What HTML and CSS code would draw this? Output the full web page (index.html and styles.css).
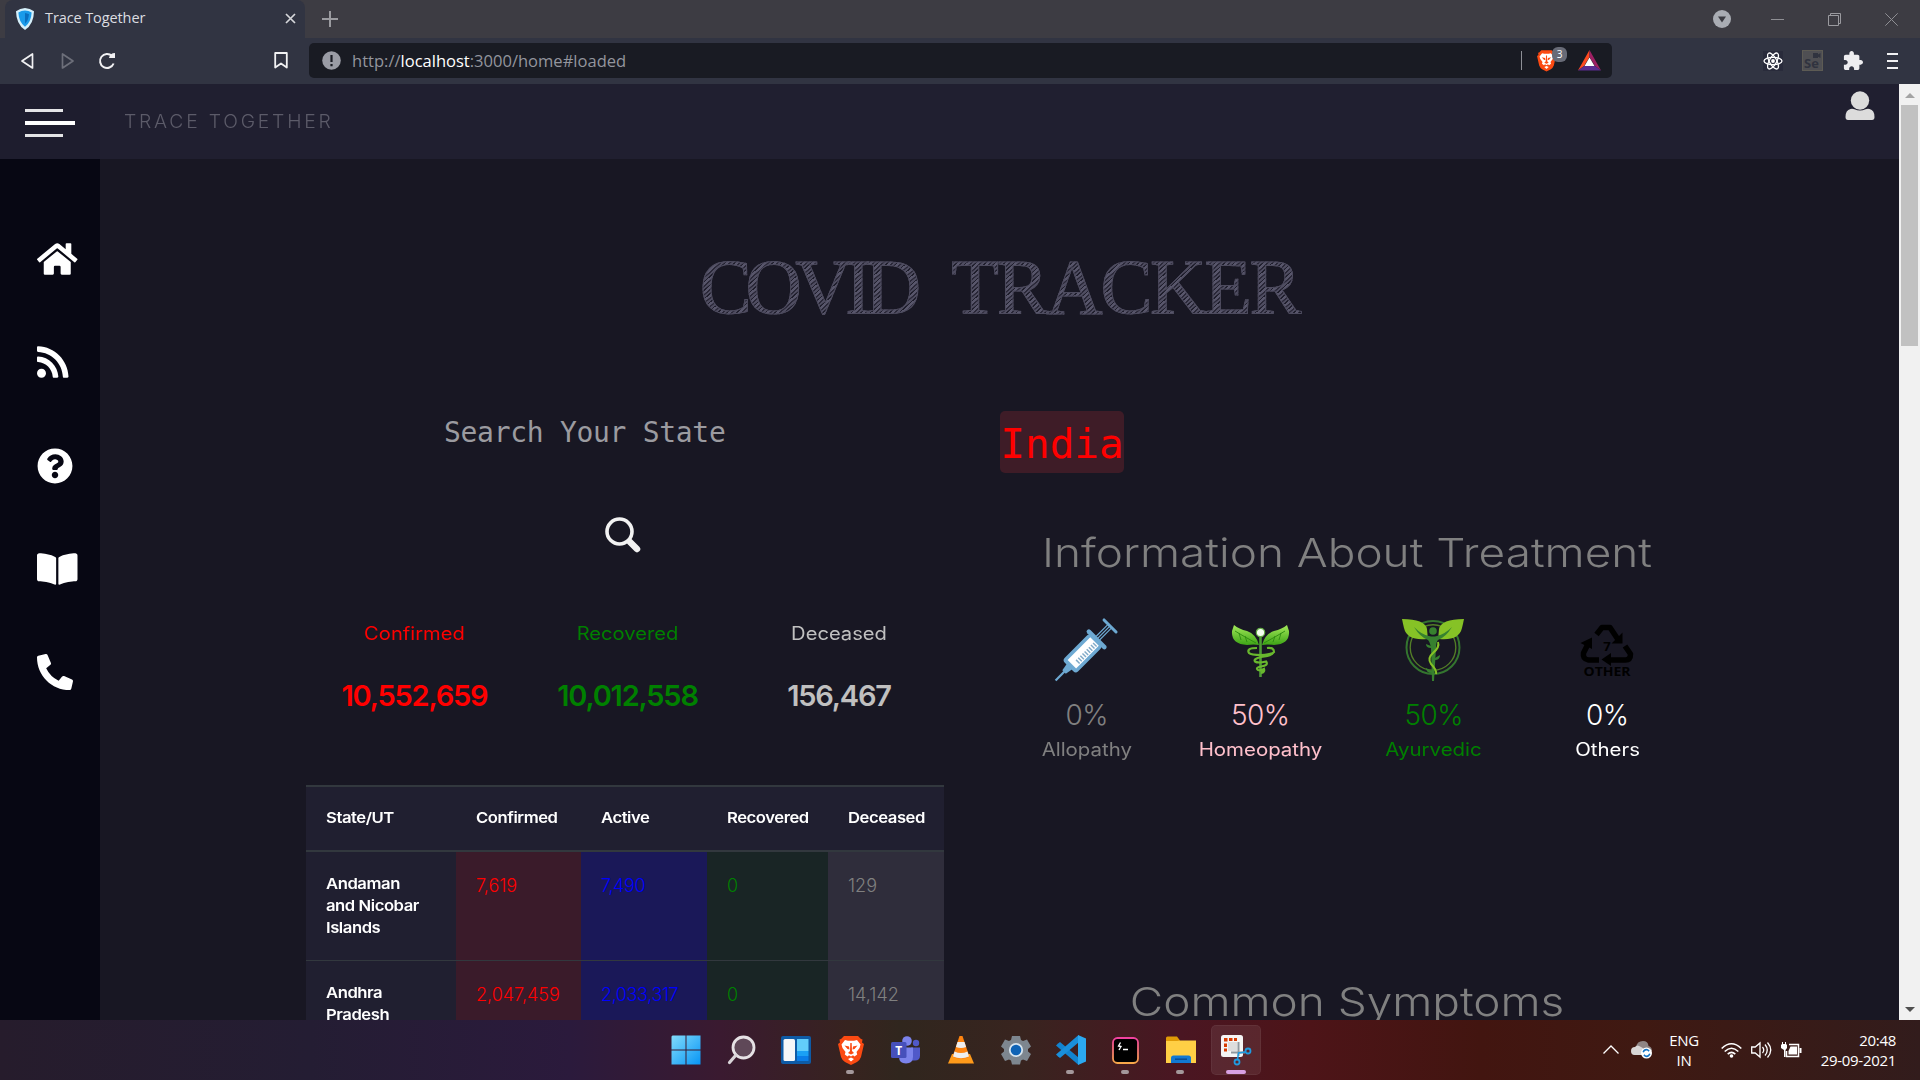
FILE: index.html
```html
<!DOCTYPE html>
<html lang="en">
<head>
<meta charset="utf-8">
<title>Trace Together</title>
<link rel="stylesheet" href="styles.css">
</head>
<body>
<svg class="defs" width="0" height="0">
  <defs>
    <symbol id="lion" viewBox="0 0 26 30">
      <path fill="#fb4a12" d="M6 1h14l3 3 1.500 0.500-.5 3L26 9l-3 13q-1 3-4 5l-6 3-6-3q-3-2-4-5L0 9l2-1.500L1.500 4.500 3 4z"/>
      <path fill="#fff" d="M7 5l3 .8h6L19 5l3.500 4.500-1 3.500-3 4 .7 2.500-2.700 2-1.500-1.200L13 21.500l-2 -1.200-1.500 1.200-2.700-2 .7-2.500-3-4-1-3.500zM13 22.500l3 1.500-3 2.500-3-2.500z"/>
      <path fill="#fb4a12" d="M6.500 10.500l4.500 1 .5 3-2-.5zM19.500 10.500l-4.500 1-.5 3 2-.5zM12.300 8h1.400l.3 8 2 2-3 1.500-3-1.500 2-2z"/>
    </symbol>
  </defs>
</svg>

<div class="tabstrip">
  <div class="tab">
    <svg width="18" height="22" viewBox="0 0 18 22"><path fill="#d5f0fb" d="M9 0q5 .2 9 3.200-.2 13-9 18.800Q.2 16.200 0 3.200 4 .2 9 0z"/><path fill="#1a9bea" d="M9 2.500q3.600.2 6.600 2-.4 9.600-6.600 14.300Q2.800 14.100 2.400 4.500q3-1.800 6.600-2z"/><path fill="#0a6fc0" d="M9 5q2 .2 4 1.200-.6 6.300-4 9.600z"/></svg>
    <span class="tab-title">Trace Together</span>
    <svg class="tab-close" width="11" height="11" viewBox="0 0 11 11"><path d="M1 1l9 9M10 1l-9 9" stroke="#d5d6da" stroke-width="1.700"/></svg>
  </div>
  <svg class="newtab" width="16" height="16" viewBox="0 0 16 16"><path d="M8 0v16M0 8h16" stroke="#9b9ba0" stroke-width="2"/></svg>
  <div class="winctl">
    <svg width="18" height="18" viewBox="0 0 18 18"><circle cx="9" cy="9" r="9" fill="#a9acb3"/><path fill="#3b3b42" d="M5 6.500h8L9 12.500z"/></svg>
    <svg width="13" height="13" viewBox="0 0 13 13"><path d="M0 6.500h13" stroke="#8f8f94"/></svg>
    <svg width="13" height="13" viewBox="0 0 13 13"><path d="M.5 2.500h10v10H.5zM2.500 2.500v-2h10v10h-2" fill="none" stroke="#9a9a9f"/></svg>
    <svg width="13" height="13" viewBox="0 0 13 13"><path d="M.3.3l12.400 12.400M12.700.3L.3 12.700" stroke="#8f8f94"/></svg>
  </div>
</div>

<div class="toolbar">
  <svg class="t-back" width="14" height="18" viewBox="0 0 14 18"><path d="M12.500 2v14L2 9z" fill="none" stroke="#f1f1f3" stroke-width="1.700" stroke-linejoin="round"/></svg>
  <svg class="t-fwd" width="14" height="18" viewBox="0 0 14 18"><path d="M1.500 2v14L12 9z" fill="none" stroke="#6d6f7a" stroke-width="1.700" stroke-linejoin="round"/></svg>
  <svg class="t-reload" width="18" height="18" viewBox="0 0 18 18"><path d="M15.600 11.500A7 7 0 1 1 14 4" fill="none" stroke="#f1f1f3" stroke-width="2"/><path d="M11 6h6V1q-5 0-6 5z" fill="#f1f1f3"/></svg>
  <svg class="t-mark" width="14" height="17" viewBox="0 0 14 17"><path d="M1.200 1h11.600v14.500L7 11.500l-5.800 4z" fill="none" stroke="#f1f1f3" stroke-width="1.800" stroke-linejoin="round"/></svg>
  <div class="url">
    <svg width="19" height="19" viewBox="0 0 19 19"><circle cx="9.500" cy="9.500" r="9.300" fill="#9a9ca5"/><path d="M9.500 4v7M9.500 13v2.200" stroke="#1a1c24" stroke-width="2.200"/></svg>
    <span class="url-text">http://<b>localhost</b>:3000/home#loaded</span>
    <i class="url-sep"></i>
    <span class="shield"><svg width="19" height="23"><use href="#lion"/></svg><em>3</em></span>
    <svg class="bat" width="23" height="21" viewBox="0 0 23 21"><path fill="#ff4a1f" d="M11.500 0v7L6 16l-6 4.500z"/><path fill="#9e1f63" d="M11.500 0L23 20.500 17 16l-5.500-9z"/><path fill="#5b2d90" d="M0 20.500L6 16h11l6 4.500z"/><path fill="#fff" d="M11.500 7.500L16.500 16h-10z"/></svg>
  </div>
  <div class="exts">
    <svg width="20" height="20" viewBox="0 0 20 20"><rect width="20" height="20" fill="#292b3b"/><g fill="none" stroke="#fff" stroke-width="1.300"><ellipse cx="10" cy="10" rx="9" ry="3.600"/><ellipse cx="10" cy="10" rx="9" ry="3.600" transform="rotate(60 10 10)"/><ellipse cx="10" cy="10" rx="9" ry="3.600" transform="rotate(120 10 10)"/></g><circle cx="10" cy="10" r="1.900" fill="#fff"/></svg>
    <svg width="21" height="21" viewBox="0 0 21 21"><rect x=".5" y=".5" width="20" height="20" fill="#4f4f53" stroke="#5d5b54"/><text x="2" y="18" class="se">Se</text><path fill="#30333f" d="M11 3h5v1.500l2.500-1.500v5L16 6.800V8h-5z"/></svg>
    <svg width="20" height="20" viewBox="1 1 22 22"><path fill="#ededf0" d="M20.500 11H19V7c0-1.100-.9-2-2-2h-4V3.500C13 2.120 11.880 1 10.500 1S8 2.120 8 3.500V5H4c-1.100 0-1.990.9-1.990 2v3.800H3.500c1.490 0 2.700 1.210 2.700 2.700s-1.210 2.700-2.700 2.700H2V20c0 1.100.9 2 2 2h3.800v-1.500c0-1.490 1.210-2.700 2.700-2.700 1.490 0 2.700 1.210 2.700 2.700V22H17c1.100 0 2-.9 2-2v-4h1.500c1.380 0 2.500-1.120 2.500-2.500S21.880 11 20.500 11z"/></svg>
    <svg width="11" height="16" viewBox="0 0 11 16"><path d="M0 1h11M0 8h11M0 15h11" stroke="#f1f1f3" stroke-width="2"/></svg>
  </div>
</div>

<div class="viewport">
  <div class="app">
    <header class="header">
      <div class="burger"><i></i><i></i><i></i></div>
      <div class="brand">TRACE TOGETHER</div>
      <svg class="user" width="30" height="30" viewBox="0 0 30 30"><circle cx="15" cy="9.500" r="9.200" fill="#dcdcdc"/><path fill="#dcdcdc" d="M.5 26q0-7 5-8 2-.5 4 .3 5.500 2.400 11 0 2-.8 4-.3 5 1 5 8 0 3-2.500 3H3Q.5 29 .5 26z"/></svg>
    </header>
    <div class="body">
      <nav class="side">
        <svg width="40.500" height="36" viewBox="0 0 576 512"><path d="M280.370 148.260L96 300.110V464a16 16 0 0 0 16 16l112.060-.29a16 16 0 0 0 15.920-16V368a16 16 0 0 1 16-16h64a16 16 0 0 1 16 16v95.640a16 16 0 0 0 16 16.050L464 480a16 16 0 0 0 16-16V300L295.670 148.260a12.190 12.190 0 0 0-15.300 0zM571.600 251.470L488 182.560V44.050a12 12 0 0 0-12-12h-56a12 12 0 0 0-12 12v72.610L318.470 43a48 48 0 0 0-61 0L4.340 251.470a12 12 0 0 0-1.600 16.900l25.500 31A12 12 0 0 0 45.150 301l235.220-193.740a12.190 12.190 0 0 1 15.300 0L530.900 301a12 12 0 0 0 16.900-1.600l25.500-31a12 12 0 0 0-1.700-16.930z"/></svg>
        <svg width="31.500" height="36" viewBox="0 0 448 512"><path d="M128.081 415.959c0 35.369-28.672 64.041-64.041 64.041S0 451.328 0 415.959s28.672-64.041 64.041-64.041 64.040 28.673 64.040 64.041zm175.660 47.250c-8.354-154.600-132.185-278.587-286.950-286.950C7.656 175.765 0 183.105 0 192.253v48.069c0 8.415 6.490 15.472 14.887 16.018 111.832 7.284 201.473 96.702 208.772 208.772.547 8.397 7.604 14.887 16.018 14.887h48.069c9.149.001 16.489-7.655 15.995-16.790zm144.249.288C439.596 229.677 251.465 40.445 16.503 32.010 7.473 31.686 0 38.981 0 48.016v48.068c0 8.625 6.835 15.645 15.453 15.999 191.179 7.839 344.627 161.316 352.465 352.465.353 8.618 7.373 15.453 15.999 15.453h48.068c9.034-.001 16.329-7.474 16.005-16.504z"/></svg>
        <svg width="36" height="36" viewBox="0 0 512 512"><path d="M504 256c0 136.997-111.043 248-248 248S8 392.997 8 256C8 119.083 119.043 8 256 8s248 111.083 248 248zM262.655 90c-54.497 0-89.255 22.957-116.549 63.758-3.536 5.286-2.353 12.415 2.715 16.258l34.699 26.310c5.205 3.947 12.621 3.008 16.665-2.122 17.864-22.658 30.113-35.797 57.303-35.797 20.429 0 45.698 13.148 45.698 32.958 0 14.976-12.363 22.667-32.534 33.976C247.128 238.528 216 254.941 216 296v4c0 6.627 5.373 12 12 12h56c6.627 0 12-5.373 12-12v-1.333c0-28.462 83.186-29.647 83.186-106.667 0-58.002-60.165-102-116.531-102zM256 338c-25.365 0-46 20.635-46 46 0 25.364 20.635 46 46 46s46-20.636 46-46c0-25.365-20.635-46-46-46z"/></svg>
        <svg width="40.500" height="36" viewBox="0 0 576 512"><path d="M542.220 32.050c-54.800 3.110-163.720 14.430-230.960 55.590-4.640 2.840-7.270 7.890-7.270 13.170v363.870c0 11.550 12.630 18.850 23.280 13.490 69.180-34.820 169.230-44.320 218.700-46.920 16.890-.89 30.020-14.430 30.020-30.660V62.750c.01-17.710-15.350-31.740-33.770-30.700zM264.730 87.640C197.500 46.480 88.580 35.170 33.780 32.050 15.360 31.010 0 45.040 0 62.750V400.600c0 16.240 13.130 29.780 30.020 30.660 49.490 2.600 149.590 12.110 218.770 46.950 10.620 5.350 23.210-1.940 23.210-13.460V100.630c0-5.290-2.620-10.140-7.270-12.990z"/></svg>
        <svg width="36" height="36" viewBox="0 0 512 512"><path d="M497.390 361.800l-112-48a24 24 0 0 0-28 6.900l-49.600 60.600A370.660 370.660 0 0 1 130.600 204.110l60.600-49.600a23.940 23.940 0 0 0 6.900-28l-48-112A24.160 24.160 0 0 0 122.600.61l-104 24A24 24 0 0 0 0 48c0 256.500 207.900 464 464 464a24 24 0 0 0 23.400-18.600l24-104a24.290 24.290 0 0 0-14.010-27.600z"/></svg>
      </nav>
      <main class="main">
        <h1 class="title"><span class="w1">COVID</span> <span class="w2">TRACKER</span></h1>
        <div class="cols">
          <section class="left">
            <div class="search-label">Search Your State</div>
            <svg class="search-icon" width="36" height="36" viewBox="0 0 36 36"><circle cx="14.500" cy="14.500" r="12.500" fill="none" stroke="#f2f2f2" stroke-width="3.600"/><path d="M25 25l7 7" stroke="#f2f2f2" stroke-width="6.500" stroke-linecap="round"/></svg>
            <div class="stats">
              <div class="stat red"><span>Confirmed</span><b>10,552,659</b></div>
              <div class="stat green"><span>Recovered</span><b>10,012,558</b></div>
              <div class="stat silver"><span>Deceased</span><b>156,467</b></div>
            </div>
            <table class="states">
              <colgroup><col class="c1"><col class="c2"><col class="c3"><col class="c4"><col class="c5"></colgroup>
              <tr><th><span>State/UT</span></th><th><span>Confirmed</span></th><th><span>Active</span></th><th><span>Recovered</span></th><th><span>Deceased</span></th></tr>
              <tr><th class="name"><span>Andaman<br>and Nicobar<br>Islands</span></th><td class="conf">7,619</td><td class="act">7,490</td><td class="rec">0</td><td class="dec">129</td></tr>
              <tr><th class="name"><span>Andhra<br>Pradesh</span></th><td class="conf">2,047,459</td><td class="act">2,033,317</td><td class="rec">0</td><td class="dec">14,142</td></tr>
            </table>
          </section>
          <section class="right">
            <div class="country">India</div>
            <h2 class="h-info">Information About Treatment</h2>
            <div class="treat">
              <div class="t-item gray">
                <svg width="62" height="62" viewBox="0 0 62 62"><g transform="rotate(45 31 31)"><path d="M31 59v15" stroke="#6da9d2" stroke-width="2.200"/><path fill="#6da9d2" d="M27 53h8l-1.500 9h-5z"/><rect x="21.500" y="17" width="19" height="38" rx="3.500" fill="#6da9d2"/><rect x="25" y="19" width="12" height="32" fill="#fff"/><path d="M31 21h5M31 24h5M31 27h5M31 30h5M31 33h5M31 36h5M31 39h5M31 42h5M31 45h5" stroke="#82abc8" stroke-width="1.500"/><path d="M20 16h22" stroke="#6da9d2" stroke-width="4.500" stroke-linecap="round"/><path d="M28.500 14V-2M31 14V-2M33.500 14V-2" stroke="#6da9d2" stroke-width="1.200"/><path d="M22.500 -3h17" stroke="#6da9d2" stroke-width="3" stroke-linecap="round"/></g></svg>
                <b>0%</b><span>Allopathy</span></div>
              <div class="t-item pink">
                <svg width="62" height="62" viewBox="0 0 62 62"><defs><linearGradient id="leaf" x1="0" y1="0" x2="0" y2="1"><stop offset="0" stop-color="#a4ea5a"/><stop offset="1" stop-color="#3da416"/></linearGradient></defs><path fill="url(#leaf)" d="M5 6q5 4 13 6 9 3 12 14-5-1-12 0Q2 25 3 12zM58 6q-5 4-13 6-9 3-12 14 5-1 12 0 16-1 15-14z"/><path d="M6 12q8 5 21 12M56 12q-8 5-21 12M10 14l2 7M16 17l2 6M52 14l-2 7M46 17l-2 6" stroke="#2c8a10" stroke-width=".9" fill="none"/><path d="M31.500 16v42" stroke="#4f9c36" stroke-width="2.600"/><g fill="none" stroke="#69b82e" stroke-width="2.200"><path d="M28 29q-11 0-8 5 2 2 12 2t13-3q0-5-7-4"/><path d="M44 34q-2 3-12 4-8 2-6 4.500 3 2 11 0 3 4-5 5-6 1-3 3.500 3 1 6-1 1 3-3 4"/></g><circle cx="31.500" cy="13.500" r="4.200" fill="#f4fff0" stroke="#63ab44" stroke-width="1.200"/></svg>
                <b>50%</b><span>Homeopathy</span></div>
              <div class="t-item green">
                <svg width="62" height="62" viewBox="0 0 62 62"><circle cx="31" cy="28.500" r="26.500" fill="none" stroke="#34752f" stroke-width="2"/><circle cx="31" cy="28.500" r="22.800" fill="none" stroke="#527d27" stroke-width="1.400"/><path fill="#86c226" d="M0 0q23 0 25 10 1 6 0 10-20 2-23-11Q1 5 0 0zM62 0Q39 0 37 10q-1 6 0 10 20 2 23-11 1-4 2-9z"/><path fill="#37812f" d="M12 8q8 8 15 9 4 1 8 0 8-2 15-9-6 10-14 13-2 2-2 8l-2 33h-2l-1-33q-1-6-3-8-8-3-14-13z"/><circle cx="31" cy="12" r="3.800" fill="#37812f"/><path d="M36 23q2 5-5 11-6 5-2 11 6 6 5 10" fill="none" stroke="#86c226" stroke-width="2"/><path fill="#37812f" d="M24 25l5 2v2q-5 0-5-4zM38 36l-5 3v2q5 0 5-5zM24 49l6 3v2q-6 0-6-5z"/></svg>
                <b>50%</b><span>Ayurvedic</span></div>
              <div class="t-item white">
                <svg width="62" height="62" viewBox="0 0 62 62"><g fill="none" stroke="#000" stroke-width="5.500" stroke-linejoin="round"><path d="M20.500 15.500l5.500-7h8l8 12M12 25L7.500 34q-1 6 5 7H23M49 27l5.500 8q0 6-5 6H34"/></g><path fill="#000" d="M46.500 13.500v11h-11zM4.500 24l11.500-5.500V30zM35 34v13l-9.500-6.500z"/><text x="31" y="32" class="rct">7</text><text x="31" y="56.500" class="rct" textLength="47" lengthAdjust="spacingAndGlyphs">OTHER</text></svg>
                <b>0%</b><span>Others</span></div>
            </div>
            <h2 class="h-sym">Common Symptoms</h2>
          </section>
        </div>
      </main>
    </div>
  </div>
  <div class="scrollbar"><i class="up"></i><i class="thumb"></i><i class="down"></i></div>
</div>

<div class="taskbar">
  <div class="apps">
    <div class="slot"><svg width="30" height="30" viewBox="0 0 30 30"><defs><linearGradient id="win" x1="0" y1="0" x2="1" y2="1"><stop offset="0" stop-color="#82dcfb"/><stop offset="1" stop-color="#0795f5"/></linearGradient></defs><path fill="url(#win)" d="M1.500.5H14.500v14H.5v-13zM15.500.5h14v14h-14zM.5 15.500h14v14H.5zM15.500 15.500h14v14h-14z"/></svg></div>
    <div class="slot"><svg width="30" height="30" viewBox="0 0 30 30"><circle cx="17.500" cy="12.500" r="10.500" fill="#5f4858" stroke="#e6e2e5" stroke-width="2.800"/><path d="M10 20L3.500 27.500" stroke="#d9d4d8" stroke-width="3.200" stroke-linecap="round"/></svg></div>
    <div class="slot"><svg width="30" height="28" viewBox="0 0 30 28"><rect width="30" height="28" rx="2" fill="#0e5ba6"/><rect x="2.500" y="3" width="11.500" height="22" rx="1.500" fill="#f4f6f8"/><path fill="#62cdfb" d="M16 3h11.500v12H16z"/><path fill="#1aa0f5" d="M16 15h11.500v5H16z"/><path fill="#0a7de8" d="M16 20h11.500v5H16z"/></svg></div>
    <div class="slot run"><svg width="26" height="30"><use href="#lion"/></svg></div>
    <div class="slot"><svg width="30" height="28" viewBox="0 0 30 28"><circle cx="25" cy="7" r="3.200" fill="#5059c9"/><path fill="#5059c9" d="M20 11.500h9v8q0 5-5 5h-4z"/><circle cx="16" cy="5" r="4.800" fill="#7b83eb"/><path fill="#7b83eb" d="M8 11.500h14v9q0 7-7 7t-7-7z"/><rect y="6" width="15.500" height="16" rx="1.500" fill="#4650bb"/><text x="7.700" y="18.500" class="teams">T</text></svg></div>
    <div class="slot"><svg width="26" height="28" viewBox="0 0 26 28"><path fill="#ff9a1a" d="M4 18h18l4 9.500H0z"/><path fill="#ff8410" d="M11.500 0h3l7 21q-8 4-17 0z"/><path fill="#eee" d="M9.500 6h7l1.600 5q-5 2-10.200 0zM6.500 15.500q6.500 3 13 0l1.500 5q-8 3.500-16 0z"/></svg></div>
    <div class="slot"><svg width="30" height="30" viewBox="0 0 30 30"><path fill="#7d868f" d="M11 1h8l1 4 2 1 4-1.500 4 7-3 2.500v2.500l3 2.500-4 7-4-1.500-2 1-1 4h-8l-1-4-2-1L4 26l-4-7 3-2.500V14l-3-2.500 4-7L8 6l2-1z"/><circle cx="15" cy="15" r="6.200" fill="#0f63b5" stroke="#d7e4ee" stroke-width="1.800"/></svg></div>
    <div class="slot run"><svg width="30" height="30" viewBox="0 0 30 30"><path fill="#1283cf" d="M2 8.500l2-1.500 18.500 15.500V30L0 10.500z"/><path fill="#1a8fdb" d="M2 21.500l2 1.500L22.500 7.500V0L0 19.500z"/><path fill="#2ba9f1" d="M22 0l8 3.500v23L22 30z"/></svg></div>
    <div class="slot run"><svg width="27" height="27" viewBox="0 0 27 27"><defs><linearGradient id="term" x1="0" y1="0" x2="0" y2="1"><stop offset="0" stop-color="#f0419f"/><stop offset="1" stop-color="#f8a849"/></linearGradient></defs><rect x="1" y="1" width="25" height="25" rx="4.500" fill="#000" stroke="url(#term)" stroke-width="1.800"/><path d="M8.500 5.500L6.500 9l2.500.5-2 3.500M11 12.500h5" fill="none" stroke="#fff" stroke-width="1.300"/></svg></div>
    <div class="slot run"><svg width="30" height="28" viewBox="0 0 30 28"><path fill="#e09a06" d="M0 2q0-1.500 1.500-1.500H11l3 4v6H0z"/><path fill="#ffcf45" d="M0 9V5h11l3-.5h16V27H0z"/><path fill="#1279d3" d="M5 27v-5q0-2.500 2.500-2.500h15Q25 19.500 25 22v5z"/><path d="M9 23.200h12" stroke="#0a4c92" stroke-width="1.500"/></svg></div>
    <div class="slot run active"><svg width="30" height="30" viewBox="0 0 30 30"><rect width="22" height="22" rx="2.500" fill="#f5f5f5"/><rect x="7" y="7" width="9" height="9" fill="#ddd"/><path fill="#d83b01" d="M3 3h3.500v3.500H3zM8 3h3.500v3H8zM13 3h3v3h-3zM3 8.500h3v3.500H3zM3 13.500h3v3H3z"/><path d="M17.500 7v14M10 17.500h14" stroke="#8f989e" stroke-width="2"/><circle cx="27" cy="16" r="2.500" fill="none" stroke="#1f9be0" stroke-width="1.800"/><circle cx="16" cy="27" r="2.500" fill="none" stroke="#1f9be0" stroke-width="1.800"/><path d="M24.800 17l-7.300 1-1 6.800" fill="none" stroke="#1f9be0" stroke-width="1.500"/></svg></div>
  </div>
  <div class="tray">
    <svg width="16" height="9" viewBox="0 0 16 9"><path d="M.5 8.500L8 1l7.500 7.500" fill="none" stroke="#fff" stroke-width="1.300"/></svg>
    <svg class="cloud" width="21" height="18" viewBox="0 0 21 18"><path fill="#8f8585" d="M5 6q1-6 7-6 5 0 5.500 5 3.500 1 3.500 5H5z"/><path fill="#d9d6d6" d="M0 10q0-4 4-4 2-3 6 0 4 1 4 8H3.500Q0 14 0 10z"/><circle cx="15.500" cy="12" r="5.500" fill="#fff"/><path d="M12.200 11.200q1-3 4-2.500l2 1.300M18.800 12.800q-1 3-4 2.500l-2-1.300" stroke="#1272c4" stroke-width="1.500" fill="none"/></svg>
    <div class="lang">ENG<br>IN</div>
    <svg class="wifi" width="21" height="16" viewBox="0 0 21 16"><g fill="none" stroke="#fff" stroke-width="1.600"><path d="M.7 6.500q9.800-9.500 19.600 0M3.700 9.500q6.800-6.500 13.600 0M6.700 12.200q3.800-3.500 7.600 0"/></g><circle cx="10.500" cy="14" r="1.800" fill="#fff"/></svg>
    <svg width="21" height="18" viewBox="0 0 21 18"><g fill="none" stroke="#fff" stroke-width="1.300"><path d="M.7 6v6h3.500L9 16V2L4.200 6z"/><path d="M11.500 6q2.500 3 0 6M14 3.500q4.500 5.500 0 11M16.500 1.500q6.500 7.500 0 15"/></g></svg>
    <svg width="21" height="16" viewBox="0 0 21 16"><path d="M8 2.500h9.500v12H5.500V9" fill="none" stroke="#fff" stroke-width="1.500"/><path fill="#fff" d="M9.500 4.500H16v8H7.500V9zM18.500 6h2v5h-2zM1 2.500V0h1v2h2V0h1v2.500h1V6L4.500 8v7H3V8L0 6V2.500z"/></svg>
    <div class="clock">20:48<br>29-09-2021</div>
  </div>
</div>
</body>
</html>
```
FILE: styles.css
```css
* { box-sizing: border-box; }
body { margin: 0; width: 1920px; height: 1080px; overflow: hidden; background: #181723; font-family: "Inter", "Liberation Sans", sans-serif; display: flex; flex-direction: column; }
svg { display: block; flex: none; overflow: visible; }
.defs { position: absolute; }

/* browser chrome */
.tabstrip, .toolbar, .taskbar { font-family: "Open Sans", "Noto Sans", sans-serif; }
.tabstrip { height: 38px; flex: none; display: flex; align-items: center; background: #3d3c43; padding-left: 5px; }
.tab { width: 300px; height: 38px; background: #313442; border-radius: 8px 8px 0 0; display: flex; align-items: center; padding: 0 9px 1px 11px; }
.tab-title { margin-left: 11px; font-size: 14.500px; line-height: 20px; padding-bottom: 1px; letter-spacing: -.1px; color: #dcdde1; white-space: nowrap; }
.tab-close { margin-left: auto; }
.newtab { margin-left: 17px; }
.winctl { margin-left: auto; display: flex; align-items: center; padding-right: 22px; }
.winctl svg:nth-child(2) { margin-left: 40px; }
.winctl svg:nth-child(3), .winctl svg:nth-child(4) { margin-left: 44px; }
.toolbar { height: 46px; flex: none; display: flex; align-items: center; background: #313442; padding-bottom: 1px; }
.t-back { margin-left: 20px; }
.t-fwd { margin-left: 27px; }
.t-reload { margin-left: 23px; }
.t-mark { margin-left: 158px; }
.url { margin-left: 21px; width: 1303px; height: 35px; border-radius: 5px; background: #191b23; display: flex; align-items: center; padding: 0 11px 0 13px; }
.url-text { margin-left: 11px; padding-bottom: 1px; font-size: 16.550px; color: #93959d; white-space: nowrap; }
.url-text b { font-weight: 400; color: #fff; }
.url-sep { margin-left: auto; width: 1px; height: 19px; background: #8d8f96; }
.shield { margin-left: 15px; display: flex; position: relative; width: 30px; }
.shield em { position: absolute; left: 15px; top: -2px; width: 15px; height: 15px; border-radius: 6px; background: #686b77; color: #fff; font: normal 10px/15px "Open Sans", sans-serif; text-align: center; }
.bat { margin-left: 11px; }
.exts { display: flex; align-items: center; padding-left: 151px; }
.exts svg:nth-child(2) { margin-left: 19px; }
.exts svg:nth-child(3) { margin-left: 20px; }
.exts svg:nth-child(4) { margin-left: 24px; }
.se { font: 700 13px "Open Sans", sans-serif; fill: #30333f; }

/* page */
.viewport { height: 936px; flex: none; display: flex; overflow: hidden; }
.app { width: 1899px; height: 936px; overflow: hidden; }
.header { height: 75px; display: flex; background: #201f30; }
.burger { width: 100px; height: 75px; background: #1e1d2e; padding: 25px 0 0 25px; display: flex; flex-direction: column; gap: 9px; }
.burger i { display: block; width: 38px; height: 3px; background: #e4e4e6; }
.burger i:nth-child(2) { width: 50px; height: 4px; background: #fff; }
.brand { margin-left: 24px; line-height: 75px; font-size: 18px; font-weight: 300; letter-spacing: 2.600px; color: #5c5b69; white-space: nowrap; transform: scaleX(1.073); transform-origin: left; }
.user { margin: 7px 24px 0 auto; }
.body { display: flex; }
.side { width: 100px; height: 861px; background: #070713; padding: 82px 0 0 37px; display: flex; flex-direction: column; gap: 67.300px; }
.side path { fill: #fff; }
.main { width: 1799px; padding-top: 88px; }
.title { margin: 0; height: 80px; text-align: center; font: 400 78px/80px "Liberation Serif", serif; white-space: nowrap; }
.title span { color: transparent; background: repeating-linear-gradient(138deg, #58566b 0 2px, #2a2838 2.300px 3.400px, #4f4d61 3.700px 5.200px, #1f1e2c 5.500px 6.400px); -webkit-background-clip: text; background-clip: text; -webkit-text-stroke: 1px #4d4b5e; }
.w1 { letter-spacing: -6.400px; margin-right: 12px; padding-right: 5px; }
.w2 { letter-spacing: -2.300px; }
.cols { display: flex; padding: 84px 0 0 206px; }
.left { width: 638px; }
.search-label { margin-left: 138px; height: 42px; line-height: 44px; font-family: "DejaVu Sans Mono", monospace; font-size: 28px; letter-spacing: -.3px; color: #9b9ba0; white-space: nowrap; }
.search-icon { margin: 64px 0 0 299px; }
.stats { margin: 69px 0 0 2px; display: grid; grid-template-columns: 213px 213px 210px; text-align: center; }
.stat span { display: block; font-size: 18px; line-height: 24px; transform: scaleX(1.12); }
.stat b { display: block; margin-top: 32px; font-size: 29px; line-height: 36px; font-weight: 600; letter-spacing: -1.200px; }
.red { color: #f00; }
.green { color: #008000; }
.silver { color: #c0c0c0; }
.gray { color: gray; }
.pink { color: pink; }
.white { color: #fff; }
.states { margin-top: 71px; width: 638px; table-layout: fixed; border-collapse: separate; border-spacing: 0; background: #201f30; }
.c1 { width: 150px; } .c2 { width: 125px; } .c3 { width: 126px; } .c4 { width: 121px; } .c5 { width: 116px; }
.states th { height: 67px; padding: 20px 0 0 20px; vertical-align: top; text-align: left; border: solid #32383e; border-width: 2px 0; font-size: 15px; line-height: 22px; font-weight: 600; letter-spacing: -.4px; color: #fff; white-space: nowrap; }
.states th span { display: inline-block; transform: scaleX(1.11); transform-origin: left; }
.states th.name, .states td { height: 109px; border-width: 0 0 1px; }
.states th.name { padding-top: 21px; }
.states td { padding: 22px 0 0 20px; vertical-align: top; border: solid #32383e; border-width: 0 0 1px; font-size: 18px; line-height: 24px; font-weight: 300; letter-spacing: 0; }
.states .act { letter-spacing: -.4px; }
.conf { background: #3a1b2a; color: #f00; }
.act { background: #1a1858; color: #00f; }
.rec { background: #192525; color: #008000; }
.dec { background: #2f2d3b; color: gray; }
.right { margin-left: 56px; width: 694px; }
.country { width: 124px; height: 62px; padding-top: 3px; line-height: 60px; border-radius: 5px; background: #3e1c27; color: #f00; font-family: "DejaVu Sans Mono", monospace; font-size: 41px; text-align: center; white-space: nowrap; }
.right h2 { margin: 54px 0 0; font-size: 40px; line-height: 51px; height: 50px; font-weight: 300; color: gray; text-align: center; white-space: nowrap; transform: scaleX(1.148); }
.treat { margin-top: 42px; display: grid; grid-template-columns: repeat(4, 173.500px); }
.t-item { display: flex; flex-direction: column; align-items: center; }
.t-item svg { margin-left: -1px; }
.t-item b { margin-top: 17px; font-size: 28px; line-height: 34px; font-weight: 300; letter-spacing: -.5px; }
.t-item span { margin-top: 6px; font-size: 18px; line-height: 24px; font-weight: 400; transform: scaleX(1.135); }
.right h2.h-sym { margin-top: 214px; }
.rct { font: 700 13px "Open Sans", sans-serif; text-anchor: middle; }
.scrollbar { width: 21px; background: #f1f1f1; display: flex; flex-direction: column; align-items: center; }
.up, .down { width: 0; height: 0; border: 5px solid transparent; }
.up { margin-top: 4px; border-bottom-color: #a3a3a3; }
.thumb { margin-top: 7px; width: 17px; height: 241px; background: #c1c1c1; }
.down { margin-top: auto; margin-bottom: 3px; border-top-color: #505050; }

/* desktop taskbar */
.taskbar { height: 60px; flex: none; display: flex; justify-content: space-between; background: linear-gradient(90deg, #261c2c 0, #241d33 310px, #2b1a3c 570px, #3a1a30 720px, #37231f 850px, #30261e 900px, #38241f 1020px, #4a1622 1180px, #4d1418 1310px, #421510 1480px, #3f1912 1640px, #321c1c 1920px); }
.apps { display: flex; padding: 5px 0 0 658px; }
.slot { position: relative; width: 55px; height: 50px; display: flex; align-items: center; justify-content: center; }
.slot.run::after { content: ""; position: absolute; left: 23px; bottom: 1px; width: 8px; height: 4px; border-radius: 2px; background: #a4989b; }
.slot.active { width: 50px; margin-left: 3px; border-radius: 5px; background: rgba(255,255,255,.08); box-shadow: inset 0 0 0 1px rgba(255,255,255,.05); }
.slot.active::after { left: 15px; width: 20px; background: #d8a0e2; }
.teams { font: 700 12px "Open Sans", sans-serif; fill: #fff; text-anchor: middle; }
.tray { display: flex; align-items: center; color: #fff; font-size: 15px; line-height: 20px; padding: 0 24px 1px 0; letter-spacing: -.3px; }
.cloud { margin-left: 12px; }
.lang { width: 36px; margin: 0 14px 0 14px; text-align: center; }
.tray svg.wifi { margin-left: 5px; }
.tray svg.wifi ~ svg { margin-left: 9px; }
.clock { width: 76px; margin-left: 18px; text-align: right; white-space: nowrap; }
```
